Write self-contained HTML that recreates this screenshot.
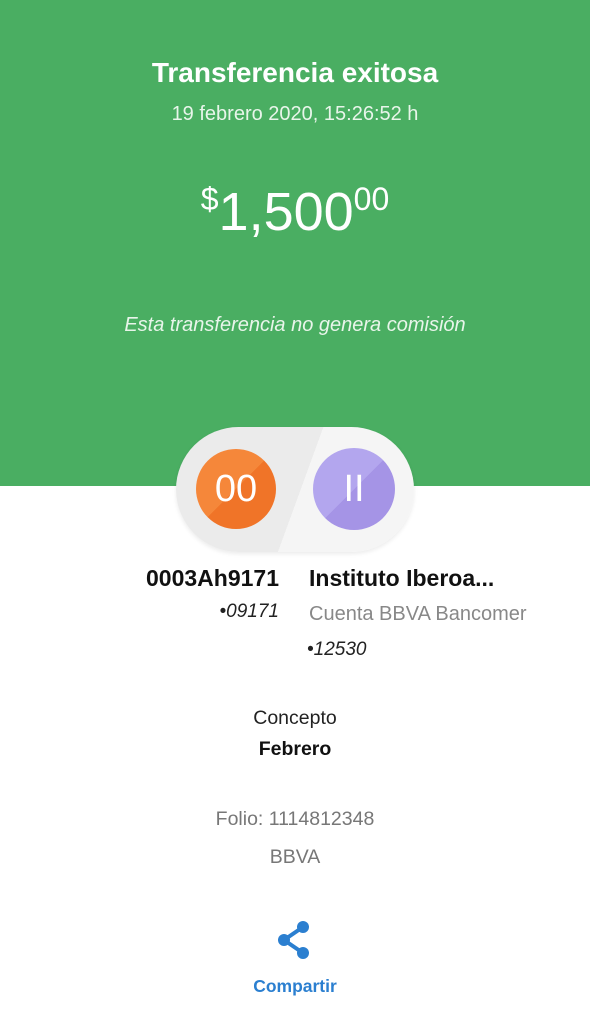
<!DOCTYPE html>
<html><head><meta charset="utf-8"><style>
*{margin:0;padding:0;box-sizing:border-box}
body{width:590px;height:1024px;background:#fff;font-family:"Liberation Sans",sans-serif;position:relative;overflow:hidden}
.g{position:absolute;left:0;top:0;width:590px;height:486px;background:#4aae62}
.t{position:absolute;width:590px;text-align:center}
.pill{position:absolute;left:176px;top:427px;width:238px;height:125px;border-radius:63px;background:linear-gradient(110deg,#ebebeb 0,#ebebeb 52%,#f5f5f5 52%);box-shadow:0 2px 4px rgba(0,0,0,.08)}
.c{position:absolute;border-radius:50%;color:#fff;text-align:center}
</style></head><body>
<div class="g"></div>
<div class="t" style="top:57px;font-size:28px;font-weight:bold;color:#fff">Transferencia exitosa</div>
<div class="t" style="top:103px;font-size:20px;color:#e8f5ea">19 febrero 2020, 15:26:52 h</div>
<div class="t" style="top:181px;color:#fff;font-size:54px"><span style="font-size:32px;vertical-align:20px">$</span>1,500<span style="font-size:32px;vertical-align:20px">00</span></div>
<div class="t" style="top:314px;font-size:20px;font-style:italic;color:#e8f5ea">Esta transferencia no genera comisión</div>
<div class="pill"></div>
<div class="c" style="left:196px;top:449px;width:80px;height:80px;background:linear-gradient(135deg,#f5873a 50%,#f07428 50%);font-size:38px;line-height:80px">00</div>
<div class="c" style="left:313px;top:448px;width:82px;height:82px;background:linear-gradient(135deg,#b3a6ee 50%,#a594e6 50%);font-size:38px;line-height:82px">II</div>
<div style="position:absolute;right:311px;top:565px;font-size:23px;font-weight:bold;color:#111">0003Ah9171</div>
<div style="position:absolute;right:311px;top:601px;font-size:19px;font-style:italic;color:#222">•09171</div>
<div style="position:absolute;left:309px;top:565px;font-size:23px;font-weight:bold;color:#111">Instituto Iberoa...</div>
<div style="position:absolute;left:309px;top:603px;font-size:20px;color:#888">Cuenta BBVA Bancomer</div>
<div style="position:absolute;left:307px;top:639px;font-size:19px;font-style:italic;color:#222">•12530</div>
<div class="t" style="top:707px;font-size:19.5px;color:#222">Concepto</div>
<div class="t" style="top:738px;font-size:19.5px;font-weight:bold;color:#111">Febrero</div>
<div class="t" style="top:808px;font-size:19.5px;color:#777">Folio: 1114812348</div>
<div class="t" style="top:846px;font-size:19.5px;color:#777">BBVA</div>
<svg style="position:absolute;left:277px;top:920px" width="34" height="40" viewBox="0 0 34 40"><g fill="#2b7fd0" stroke="#2b7fd0"><circle cx="26" cy="7" r="6" stroke="none"/><circle cx="7" cy="20" r="6" stroke="none"/><circle cx="26" cy="33" r="6" stroke="none"/><path d="M26 7L7 20L26 33" fill="none" stroke-width="4"/></g></svg>
<div class="t" style="top:976px;font-size:17.5px;font-weight:bold;color:#2b7fd0">Compartir</div>
</body></html>
